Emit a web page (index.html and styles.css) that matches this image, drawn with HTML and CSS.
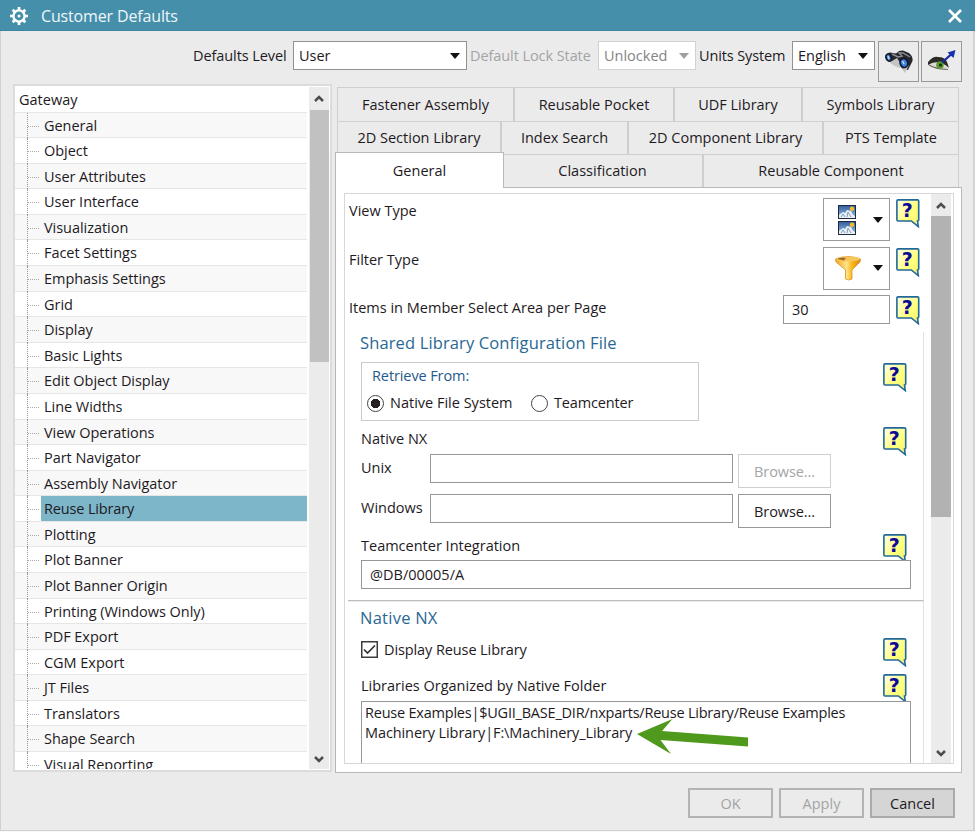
FILE: index.html
```html
<!DOCTYPE html>
<html lang="en">
<head>
<meta charset="utf-8">
<title>Customer Defaults</title>
<link rel="stylesheet" href="styles.css">
</head>
<body>
<svg class="defs" width="0" height="0" aria-hidden="true">
  <defs>
    <linearGradient id="note" x1="0" y1="0" x2="1" y2="1"><stop offset="0" stop-color="#ffffe8"/><stop offset=".6" stop-color="#ffff78"/><stop offset="1" stop-color="#f4f07a"/></linearGradient>
    <linearGradient id="gold" x1="0" y1="0" x2="1" y2="0"><stop offset="0" stop-color="#f2a51f"/><stop offset=".45" stop-color="#ffe48c"/><stop offset=".65" stop-color="#fbb91c"/><stop offset="1" stop-color="#d78512"/></linearGradient>
    <linearGradient id="sky" x1="0" y1="0" x2="0" y2="1"><stop offset="0" stop-color="#355fa0"/><stop offset="1" stop-color="#9fc4e8"/></linearGradient>
    <symbol id="help" viewBox="0 0 24 29">
      <path d="M2 .9H21.5Q22.700 .9 22.700 2V21Q22.700 22 21.500 22L22.300 27.600L15.300 22H2Q.9 22 .9 21V2Q.9 .9 2 .9Z" fill="url(#note)" stroke="#22689b" stroke-width="1.6"/>
      <text x="11.3" y="17.500" text-anchor="middle" class="help-mark">?</text>
    </symbol>
    <symbol id="up" viewBox="0 0 10 8"><path d="M1 6L5 2L9 6" fill="none" stroke="#4d4d4d" stroke-width="2.5"/></symbol>
    <symbol id="down" viewBox="0 0 10 8"><path d="M1 2L5 6L9 2" fill="none" stroke="#4d4d4d" stroke-width="2.5"/></symbol>
    <symbol id="photo" viewBox="0 0 18 14"><rect width="18" height="14" fill="#202a3d"/><rect x="1" y="1" width="16" height="12" fill="url(#sky)"/><circle cx="14" cy="3.8" r="2.2" fill="#f7bd2f"/><path d="M1 13V10L5 7L7 8L9 5L13 6L15 10L17 11V13Z" fill="#eaf0f5"/><path d="M3 12L5 9L7 12M9 12L10 7L13 12" fill="none" stroke="#809db4"/></symbol>
  </defs>
</svg>
<div class="window">
  <header class="titlebar">
    <svg class="gear" viewBox="0 0 18 18"><circle cx="9" cy="9" r="5.6" fill="none" stroke="#fff" stroke-width="2.4"/><path d="M9 0V3M9 15V18M0 9H3M15 9H18M2.7 2.7L4.7 4.7M13.3 13.3L15.3 15.3M2.7 15.3L4.7 13.3M13.3 4.7L15.3 2.7" stroke="#fff" stroke-width="2.7"/><circle cx="9" cy="9" r="1.5" fill="#fff"/></svg>
    <span class="title">Customer Defaults</span>
    <svg class="close" viewBox="0 0 14 14"><path d="M1 1L13 13M13 1L1 13" stroke="#fff" stroke-width="2.6"/></svg>
  </header>

  <div class="toolbar">
    <span class="lab lab-level">Defaults Level</span>
    <div class="select sel-level"><span>User</span><i class="caret"></i></div>
    <span class="lab lab-lock off">Default Lock State</span>
    <div class="select sel-lock off"><span>Unlocked</span><i class="caret"></i></div>
    <span class="lab lab-units">Units System</span>
    <div class="select sel-units"><span>English</span><i class="caret"></i></div>
    <button class="tool"><svg width="30" height="26" viewBox="0 0 30 26"><path d="M1 8Q2 4 6 3.500L12 4.500L15 2L19 1.500L25 4Q29 7 28.500 12L26 17L24 21L19 20L16 17L14 12L10 12L5 13L2 11Z" fill="#26272d"/><path d="M8 12L13 9L17 15L16 19Q11 18 6 14ZM18 20L25 16L21 24Z" fill="#c4c4c6"/><path d="M8 5L14 8L18 7L15 4L19 4L26 8" fill="none" stroke="#8d8f96" stroke-width="1.400"/><ellipse cx="4.800" cy="8.500" rx="2.400" ry="3.600" fill="#4a83cf" stroke="#161a2c" stroke-width="1.400" transform="rotate(-20 5 9)"/><ellipse cx="20" cy="14" rx="3.800" ry="4.500" fill="#3c82df" stroke="#15182a" stroke-width="1.700" transform="rotate(-20 20 14)"/><path d="M4 7L5 10M18.500 12L20 15" stroke="#b4dcff" stroke-width="1.500"/></svg></button>
    <button class="tool"><svg width="30" height="26" viewBox="0 0 30 26"><path d="M2 15Q9 10 20 18L18 21Q9 22 2 15Z" fill="#dcd9d4"/><path d="M1 13Q6 7 11 8Q18 8 20 13L22 19Q14 11 5 14L1 16Z" fill="#2c2a27"/><path d="M2 16Q8 20 21 20.500" fill="none" stroke="#6b6760" stroke-width="1.200"/><circle cx="13" cy="16" r="3.800" fill="#579b2c"/><circle cx="13.500" cy="16" r="1.500" fill="#16260f"/><path d="M15 13.500L24 5.500" stroke="#1629a4" stroke-width="2.200"/><path d="M28.500 1L26.500 9L20.500 3.500Z" fill="#1730b0"/></svg></button>
  </div>

  <div class="main">
    <nav class="tree">
      <ul class="rows">
        <li class="root">Gateway</li>
        <li><span>General</span></li><li><span>Object</span></li><li><span>User Attributes</span></li><li><span>User Interface</span></li><li><span>Visualization</span></li><li><span>Facet Settings</span></li><li><span>Emphasis Settings</span></li><li><span>Grid</span></li><li><span>Display</span></li><li><span>Basic Lights</span></li><li><span>Edit Object Display</span></li><li><span>Line Widths</span></li><li><span>View Operations</span></li><li><span>Part Navigator</span></li><li><span>Assembly Navigator</span></li><li class="selected"><span>Reuse Library</span></li><li><span>Plotting</span></li><li><span>Plot Banner</span></li><li><span>Plot Banner Origin</span></li><li><span>Printing (Windows Only)</span></li><li><span>PDF Export</span></li><li><span>CGM Export</span></li><li><span>JT Files</span></li><li><span>Translators</span></li><li><span>Shape Search</span></li><li><span>Visual Reporting</span></li>
      </ul>
      <div class="scroll"><svg class="arrow"><use href="#up"/></svg><div class="thumb"></div><svg class="arrow last"><use href="#down"/></svg></div>
    </nav>

    <section class="right">
      <div class="tabs t1"><div>Fastener Assembly</div><div>Reusable Pocket</div><div>UDF Library</div><div>Symbols Library</div></div>
      <div class="tabs t2"><div>2D Section Library</div><div>Index Search</div><div>2D Component Library</div><div>PTS Template</div></div>
      <div class="tabs t3"><div class="active">General</div><div>Classification</div><div>Reusable Component</div></div>
      <div class="page">
        <div class="view">
          <div class="content">
            <div class="opt"><label>View Type</label><div class="pick"><div class="photos"><svg><use href="#photo"/></svg><svg><use href="#photo"/></svg></div><i class="caret"></i></div><svg class="help"><use href="#help"/></svg></div>
            <div class="opt"><label>Filter Type</label><div class="pick"><svg class="funnel" viewBox="0 0 28 26"><path d="M1.5 4Q14 -1 26.500 4L26 7L18 15V24Q14.500 26 11.500 24V15L2 7Z" fill="url(#gold)" stroke="#dc9220" stroke-width=".8"/><ellipse cx="14" cy="4" rx="12" ry="2.300" fill="#f7c75c"/><path d="M3 4Q7 1.500 12 3L10 5.500Z" fill="#a36a26"/></svg><i class="caret"></i></div><svg class="help"><use href="#help"/></svg></div>
            <div class="opt num"><label>Items in Member Select Area per Page</label><div class="field small">30</div><svg class="help"><use href="#help"/></svg></div>

            <div class="group g1">
              <h2 class="h-shared">Shared Library Configuration File</h2>
              <div class="line l-radio">
                <div class="frame"><div class="legend">Retrieve From:</div><div class="radios"><i class="radio on"></i><span class="native">Native File System</span><i class="radio"></i><span class="tc">Teamcenter</span></div></div>
                <svg class="help"><use href="#help"/></svg>
              </div>
              <div class="line l-nx"><span>Native NX</span><svg class="help"><use href="#help"/></svg></div>
              <div class="line path"><span class="name">Unix</span><div class="field"></div><div class="browse off">Browse...</div></div>
              <div class="line path"><span class="name">Windows</span><div class="field"></div><div class="browse">Browse...</div></div>
              <div class="line l-tc"><span>Teamcenter Integration</span><svg class="help"><use href="#help"/></svg></div>
              <div class="field wide">@DB/00005/A</div>
            </div>
            <div class="group g2">
              <h2 class="h-native">Native NX</h2>
              <div class="line l-check"><svg class="check" viewBox="0 0 17 17"><rect x=".75" y=".75" width="15.500" height="15.500" fill="#fff" stroke="#3c3c3c" stroke-width="1.500"/><path d="M3 8.500L6.500 12L14 4.500" fill="none" stroke="#333" stroke-width="1.700"/></svg><span>Display Reuse Library</span><svg class="help"><use href="#help"/></svg></div>
              <div class="line l-lib"><span>Libraries Organized by Native Folder</span><svg class="help"><use href="#help"/></svg></div>
              <div class="area"><div class="a1">Reuse Examples|$UGII_BASE_DIR/nxparts/Reuse Library/Reuse Examples</div><div class="a2">Machinery Library|F:\Machinery_Library</div>
                <svg class="pointer" viewBox="0 0 112 36"><path d="M0 15L35.500 0L25 12L111 18.500V27.500L23.500 21L34 35Z" fill="#4f9a1c"/></svg>
              </div>
            </div>
          </div>
          <div class="scroll"><svg class="arrow"><use href="#up"/></svg><div class="thumb"></div><svg class="arrow last"><use href="#down"/></svg></div>
        </div>
      </div>
    </section>
  </div>
  <footer class="buttons"><div class="btn off">OK</div><div class="btn off">Apply</div><div class="btn cancel">Cancel</div></footer>
</div>
</body>
</html>
```
FILE: styles.css
```css
* { box-sizing: border-box; }
body { margin: 0; width: 975px; height: 832px; overflow: hidden; background: #f8f8f8; }
.defs { position: absolute; }
.window { width: 975px; height: 831px; background: #ebebeb; border-bottom: 1px solid #d0d0d0; box-shadow: inset 1px 0 #cfcfcf, inset -2px 0 #d5d5d5; font-family: "Open Sans", "Noto Sans", sans-serif; font-size: 14.5px; font-stretch: 92%; color: #1e1a1e; line-height: 20px; white-space: nowrap; overflow: hidden; }
.titlebar { height: 31px; background: #468fab; border-bottom: 1px solid #3b85a1; display: flex; align-items: center; padding: 2px 13px 0 10px; color: #eef7fa; }
.gear { width: 18px; height: 18px; }
.title { margin-left: 13px; font-size: 16px; letter-spacing: -.15px; }
.close { width: 14px; height: 14px; margin-left: auto; }

.toolbar { display: flex; align-items: flex-start; height: 53px; padding: 10px 0 0 193px; }
.lab { height: 29px; line-height: 30px; letter-spacing: -.08px; }
.lab-level { width: 100px; }
.lab-lock { width: 128px; margin-left: 3px; }
.lab-units { width: 93px; margin-left: 3px; letter-spacing: -.12px; }
.off { color: #a4a4a4; }
.select { display: flex; align-items: center; justify-content: space-between; height: 29px; padding: 1px 6px 0 5px; border: 1px solid #929292; background: #fff; }
.select.off { border-color: #d2d2d2; color: #858585; }
.sel-level { width: 174px; }
.sel-lock { width: 98px; }
.sel-units { width: 83px; }
.caret { width: 0; height: 0; border: 5px solid transparent; border-top: 6px solid #111; border-bottom: 0; flex: none; }
.off .caret { border-top-color: #a0a0a0; }
.tool { width: 41px; height: 41px; padding: 0; margin-left: 3px; border: 1px solid #999; background: #ebebeb; display: flex; align-items: center; justify-content: center; }
.tool + .tool { margin-left: 2px; }

.main { display: flex; height: 689px; padding-left: 13px; }
.tree { width: 319px; height: 688px; border: 2px solid #dcdcdc; background: #fff; display: flex; overflow: hidden; padding: 1px 1px 1px 0; }
.rows { list-style: none; margin: 0; padding: 0; width: 293px; overflow: hidden; }
.rows li { height: 25.58px; border-bottom: 1px solid #e6e6e6; line-height: 25px; display: flex; background: #fff; }
.rows li:nth-child(even) { background: #f8f8f8; }
.rows .root { padding-left: 4px; }
.rows li:not(.root)::before { content: ""; flex: none; width: 12px; height: 25.6px; margin-left: 12px; border-left: 1px dotted #999; background: repeating-linear-gradient(90deg, #aaa 0 1px, transparent 1px 2px) 0 13px / 12px 1px no-repeat; }
.rows span { margin-left: 1px; padding-left: 3px; flex: 1; letter-spacing: -.04px; }
.rows .selected span { background: #7db5c9; letter-spacing: -.15px; }
.scroll { display: flex; flex-direction: column; align-items: center; background: #ebebeb; flex: none; }
.tree .scroll { margin-left: 2px; width: 20px; }
.tree .thumb { width: 19px; height: 252px; margin-top: 7px; background: #c1c1c1; }
.arrow { width: 10px; height: 8px; flex: none; margin-top: 8px; }
.last { margin: auto 0 6px; }

.right { margin-left: 3px; width: 627px; padding-top: 3px; }
.tabs { display: grid; height: 33px; margin: 0 3px 0 2px; border: 1px solid #cfcfcf; border-bottom: 0; line-height: 33px; text-align: center; }
.tabs div + div { border-left: 2px solid #cecece; }
.t1 { height: 34px; grid-template-columns: 175px 160px 128px 1fr; }
.t2 { grid-template-columns: 162px 127px 195px 1fr; line-height: 32px; }
.t3 { grid-template-columns: 166px 199px 1fr; border-left: 0; line-height: 32px; }
.t3 .active { margin: -3px -1px -1px -2px; background: #fff; border: 1px solid #b8b8b8; border-bottom: 0; z-index: 1; line-height: 35px; }
.t3 .active + div { border-left: 0; }
.page { height: 586px; border: 1px solid #b8b8b8; background: #fff; padding: 5px 7px 8px 8px; }
.view { height: 571px; border: 1px solid #d7d7d7; display: flex; overflow: hidden; padding-right: 2px; }
.content { flex: 1; min-width: 0; overflow: hidden; padding: 4px 0 0 3px; }
.view .scroll { width: 20px; }
.view .thumb { width: 20px; height: 301px; margin-top: 6px; background: #b2b2b2; }
.help { width: 24px; height: 29px; flex: none; overflow: visible; }
.help-mark { font: bold 19px "DejaVu Sans", sans-serif; fill: #0a0a96; }

.opt { display: flex; align-items: flex-start; height: 48.5px; padding-right: 11px; }
.opt label { flex: 1; padding-top: 3px; padding-left: 1px; }
.opt .help { margin-left: 6px; margin-top: 1px; }
.num { height: 37px; }
.pick { width: 67px; height: 43px; border: 1px solid #9a9a9a; display: flex; align-items: center; justify-content: space-between; padding: 0 6px 0 10px; }
.photos { display: grid; gap: 2px; margin-left: 4px; }
.photos svg { width: 18px; height: 14px; }
.funnel { width: 28px; height: 26px; }
.field { height: 29px; border: 1px solid #979797; background: #fff; line-height: 28px; padding-left: 8px; }
.small { width: 107px; }

.group { width: 576px; border-right: 1px solid #e2e2e2; padding-left: 13px; }
.g1 { height: 269px; border-bottom: 1px solid #bdbdbd; box-shadow: 0 1px #ececec; }
h2 { margin: 0; font-size: 16.5px; font-weight: 400; line-height: 22px; color: #296894; height: 31px; margin-left: -1px; }
.h-shared { letter-spacing: .13px; }
.h-native { letter-spacing: .25px; }
.line { display: flex; align-items: flex-start; }
.line .help { margin-left: auto; margin-right: 16px; }
.frame { width: 338px; height: 59px; border: 1px solid #cacad0; padding-left: 5px; margin-top: -1px; }
.legend { color: #24588a; padding: 3px 0 0 5px; letter-spacing: -.1px; }
.radios { display: flex; align-items: center; margin-top: 7px; }
.radio { flex: none; width: 17px; height: 17px; border: 1.5px solid #444; border-radius: 50%; }
.radio.on { background: radial-gradient(circle, #242024 0 4.5px, #fff 5px); }
.radios .native { margin-left: 6px; width: 141px; }
.radios .tc { margin-left: 6px; letter-spacing: -.15px; }
.l-radio { height: 64px; }
.l-nx { height: 27px; }
.l-nx span { margin-top: 2px; }
.path { height: 40px; }
.path .name { width: 69px; padding-top: 4px; }
.path .field { width: 303px; }
.browse { width: 93px; height: 34px; margin-left: 5px; border: 1px solid #999; text-align: center; line-height: 33px; letter-spacing: -.1px; }
.browse.off { border-color: #cfcfcf; }
.l-tc { height: 26px; }
.l-tc span { margin-top: 2px; }
.wide { width: 550px; position: relative; }
.g2 { height: 180px; padding-top: 6px; }
.l-check { height: 36px; }
.check { width: 17px; height: 17px; margin-top: 3px; }
.l-check span { margin: 2px 0 0 6px; letter-spacing: -.1px; }
.l-lib { height: 27px; }
.l-lib span { margin-top: 2px; }
.area { position: relative; width: 550px; height: 90px; border: 1px solid #979797; background: #fff; padding: 1px 3px; }
.a1 { letter-spacing: -.22px; }
.a2 { letter-spacing: -.1px; }
.pointer { position: absolute; left: 275px; top: 17px; width: 112px; height: 36px; }

.buttons { display: flex; gap: 6px; margin: 15px 0 0 688px; }
.btn { width: 85px; height: 30px; border: 2px solid #b4b4b4; text-align: center; line-height: 27px; }
.cancel { background: #d5d5d5; border-color: #aaa; }
```
